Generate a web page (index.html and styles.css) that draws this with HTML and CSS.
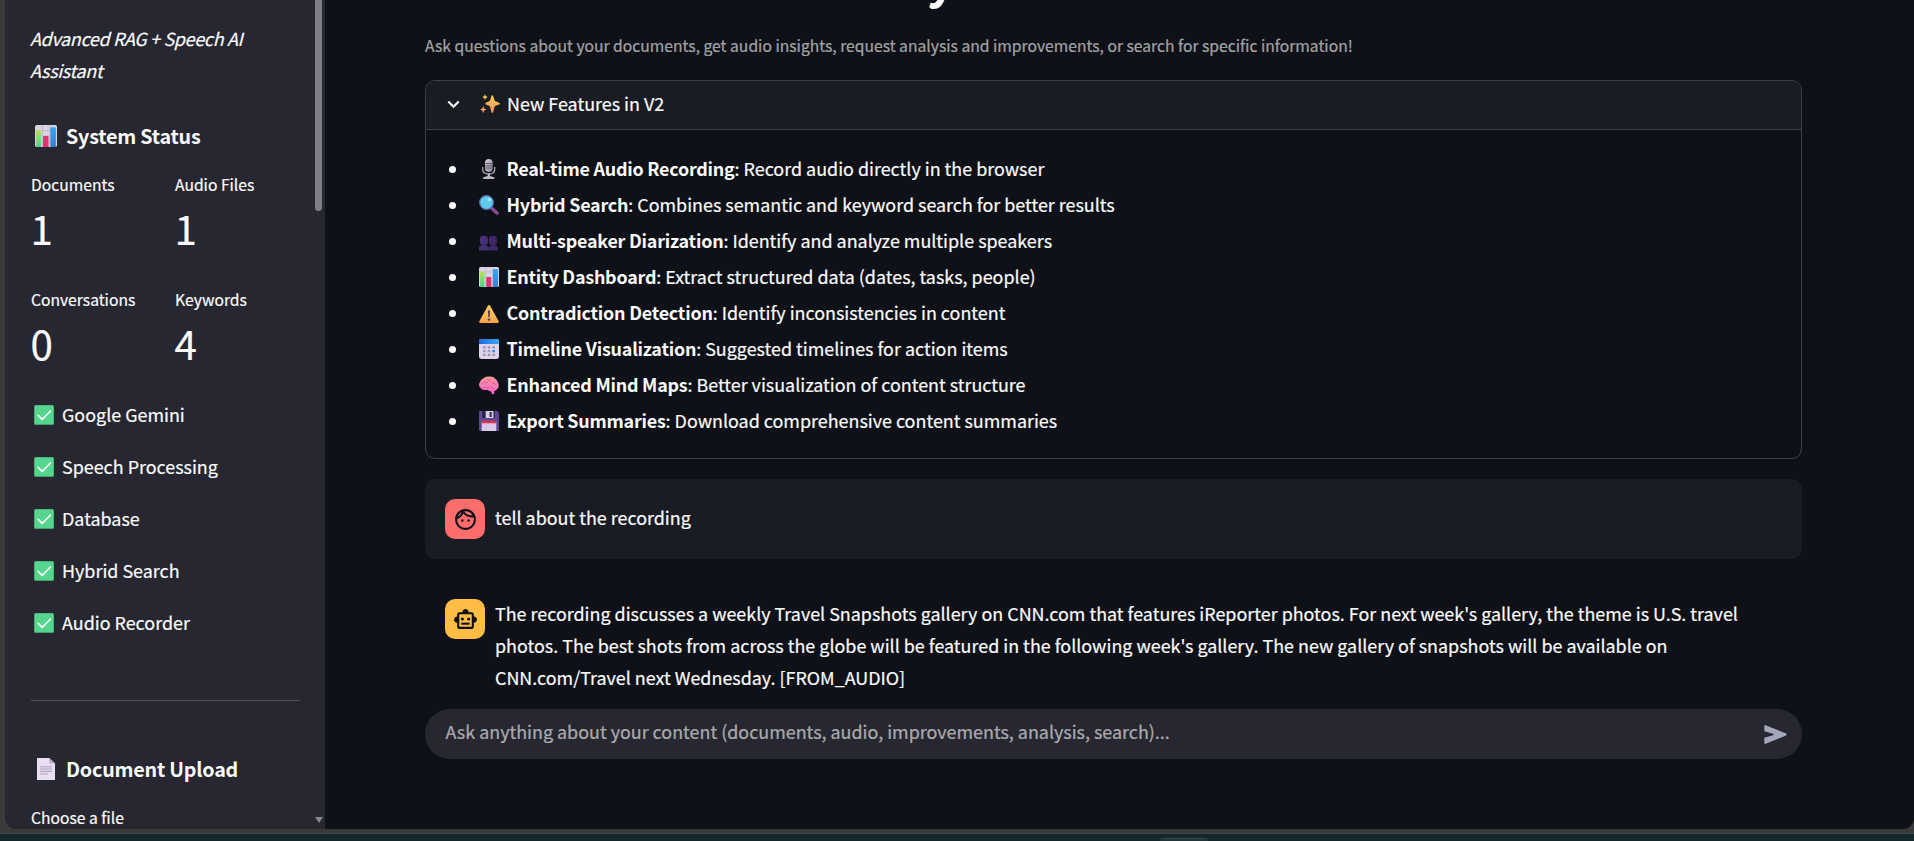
FILE: index.html
```
<!DOCTYPE html>
<html lang="en">
<head>
<meta charset="utf-8">
<title>Advanced RAG + Speech AI Assistant</title>
<link rel="stylesheet" href="styles.css">
</head>
<body>
<svg class="defs" width="0" height="0" aria-hidden="true">
  <defs>
    <linearGradient id="g-green" x1="0" y1="0" x2="0" y2="1"><stop offset="0" stop-color="#b4e34c"/><stop offset="1" stop-color="#4fd18b"/></linearGradient>
    <linearGradient id="g-blue" x1="0" y1="0" x2="0" y2="1"><stop offset="0" stop-color="#2fa8f5"/><stop offset="1" stop-color="#3b7fd0"/></linearGradient>
    <linearGradient id="g-amber" x1="0" y1="0" x2="0" y2="1"><stop offset="0" stop-color="#ffd255"/><stop offset="1" stop-color="#ffa04f"/></linearGradient>
    <linearGradient id="g-spark" x1="0.6" y1="0" x2="0.4" y2="1"><stop offset="0" stop-color="#ffd352"/><stop offset="1" stop-color="#f98b62"/></linearGradient>
    <linearGradient id="g-brain" x1="0" y1="0" x2="0" y2="1"><stop offset="0" stop-color="#f79a9a"/><stop offset="1" stop-color="#ff62cf"/></linearGradient>
    <linearGradient id="g-mic" x1="0" y1="0" x2="1" y2="1"><stop offset="0" stop-color="#d8d4de"/><stop offset="1" stop-color="#8d8299"/></linearGradient>
    <linearGradient id="g-people" x1="0" y1="0" x2="1" y2="0"><stop offset="0" stop-color="#4a3279"/><stop offset="1" stop-color="#3b2263"/></linearGradient>
    <linearGradient id="g-cal" x1="0" y1="0" x2="1" y2="0"><stop offset="0" stop-color="#2367d8"/><stop offset="1" stop-color="#33a9fb"/></linearGradient>
    <symbol id="check" viewBox="0 0 20 20"><rect width="20" height="20" rx="1.6" fill="#3fa56c"/><rect x=".8" y=".4" width="18.6" height="18.6" rx="1.4" fill="#55d58d"/><path d="M4.2 10.3l4 4 8.3-8.3" fill="none" stroke="#f3fff8" stroke-width="1.7" stroke-linecap="round" stroke-linejoin="round"/></symbol>
    <symbol id="chart" viewBox="0 0 20 20"><rect width="20" height="20" rx="1.6" fill="#d9d3e2"/><path d="M0 5h20M0 10h20M0 15h20M6.7 0v20M13.4 0v20" stroke="#bdb4c9" stroke-width=".7"/><path d="M1 5.5q0-1 1-1h2.4q1 0 1 1V20H1z" fill="url(#g-green)"/><path d="M7.300 11q0-1 1-1h3q1 0 1 1v9h-5z" fill="#e2316f"/><path d="M14 3q0-1 1-1h3q1 0 1 1v17h-5z" fill="url(#g-blue)"/></symbol>
    <symbol id="page" viewBox="0 0 20 20"><path d="M1.800 0H13l5.200 5v15H1.800z" fill="#e7def0"/><path d="M13 0v5h5.200z" fill="#b9adc6"/><path d="M4.500 8h11M4.500 10h11M4.500 12.200h11M4.500 14.500h7" stroke="#a99cba" stroke-width=".9"/></symbol>
    <symbol id="sparkles" viewBox="0 0 20 20"><g fill="url(#g-spark)"><path d="M12.300 1.200c.5 0 .7.400.9 1l1.200 3.700c.3.900.8 1.400 1.700 1.700l3 1.100c.9.300.9 1.400 0 1.700l-3 1.200c-.9.300-1.400.8-1.700 1.700l-1.200 4.600c-.3 1.300-1.500 1.300-1.800 0l-1.200-4.600c-.3-.9-.8-1.400-1.700-1.700l-2.600-1.200c-.8-.3-.8-1.400 0-1.700l2.600-1.100c.9-.3 1.400-.8 1.700-1.700l1.200-3.700c.2-.6.4-1 .9-1z"/><path d="M5 .2l.9 2 2 .9-2 .9-.9 2-.9-2-2-.9 2-.9zM3.200 12l1 2.500 2.500 1-2.500 1-1 2.700-1-2.700-2.400-1 2.400-1z"/></g></symbol>
    <symbol id="mic" viewBox="0 0 20 20"><rect x="6" y="0" width="7.600" height="13" rx="3.800" fill="url(#g-mic)"/><path d="M6.200 4.500h7.200M6.200 6.800h7.200M6.200 9h7.200" stroke="#5c5468" stroke-width="1"/><path d="M3.700 8v2.200q0 4.800 6 4.800t6-4.800V8" fill="none" stroke="#aaa1b5" stroke-width="1.300"/><path d="M8.700 14.500h2.200v2.600l4.400 1.100V20H4.200v-1.800l4.500-1.100z" fill="#bfb8c8"/></symbol>
    <symbol id="magnifier" viewBox="0 0 20 20"><path d="M12.500 13l5.500 5" stroke="#8a4a90" stroke-width="3.600" stroke-linecap="round"/><circle cx="7.500" cy="7.500" r="6.900" fill="#5ecbee" stroke="#5468a4" stroke-width="1.200"/><ellipse cx="10.500" cy="4.500" rx="2" ry="1.600" fill="#a5e5f8"/></symbol>
    <symbol id="people" viewBox="0 0 20 20"><g fill="url(#g-people)"><path d="M1 8q0-3.200 4-3.200T9 8v1.800q0 4-2.500 4.500h-3Q1 13.800 1 9.800zM10 8q0-3.200 4-3.200T18 8v1.800q0 4-2.500 4.500h-3Q10 13.800 10 9.800z"/><path d="M0 17q0-2 2-2.200l3-.8 3 .8q2 .2 2 2.200v2.500H0zM10.200 17q0-2 2-2.200l2-.8 2.800.8q2 .2 2 2.200v2.500h-8.800z"/></g></symbol>
    <symbol id="warning" viewBox="0 0 20 20"><path d="M8.900 2.800q1.100-1.800 2.200 0l8.600 15.400q.6 1.800-1 1.800H1.300q-1.600 0-1-1.800z" fill="url(#g-amber)"/><path d="M9 7.500h2l-.3 6.800H9.300z" fill="#4b3b55"/><circle cx="10" cy="16.600" r="1.200" fill="#4b3b55"/></symbol>
    <symbol id="calendar" viewBox="0 0 20 20"><rect width="20" height="20" rx="2.400" fill="#ddd6ea"/><path d="M0 5V2q0-2 2-2h16q2 0 2 2v3z" fill="url(#g-cal)"/><path d="M4 7.300h2.600v2.200H4zM8.700 7.300h2.600v2.200H8.700zM13.300 7.300H16v2.200h-2.700zM4 11h2.600v2.200H4zM8.700 11h2.600v2.200H8.700zM4 14.800h2.600V17H4zM8.700 14.800h2.600V17H8.700zM13.300 14.800H16V17h-2.700z" fill="#a296b3"/><path d="M13.300 11H16v2.200h-2.700z" fill="#2f8be6"/></symbol>
    <symbol id="brain" viewBox="0 0 20 20"><path d="M3 14.200Q-.8 12.500.3 8.300 1.500 4.500 4.800 3q2.500-1.800 6-1.400 3.500-.2 5.700 2.400 3 2 3.200 5.700.3 3.500-2 4.700-1 1.400-2.700 1.500l.4 2.600q-1.800 1.400-2.800-.2l-.5-1.800q-2.300-.3-3.200-1.500-3.300.3-5.900-.8z" fill="url(#g-brain)"/><path d="M3 9q3-3.500 6-1.200M8 3.500q1 2.400 3.700 2M13 8q3-.8 4 2M4 12.500q4 1.500 7-.8M11.800 11.500q2 .8 3 2.600" fill="none" stroke="#d6508f" stroke-width=".8"/></symbol>
    <symbol id="floppy" viewBox="0 0 20 20"><path d="M0 1q0-1 1-1h17.500L20 1.500V19q0 1-1 1H1q-1 0-1-1z" fill="#5b4a92"/><path d="M3.300 0H16v7H3.300z" fill="#2f2347"/><path d="M6.700 0h7.800v7H6.700z" fill="#d8d0e6"/><path d="M10.500 1h2.300v5h-2.300z" fill="#44365f"/><path d="M2.700 10.500h14.600V20H2.700z" fill="#d8c9e6"/><path d="M2.700 9.800h14.600v2.400H2.700z" fill="#e2304c"/></symbol>
  </defs>
</svg>

<div class="window">
  <aside class="sidebar">
    <p class="tagline">Advanced RAG + Speech AI<br>Assistant</p>

    <h2 class="section-title status-title"><svg class="emoji-lg"><use href="#chart"/></svg>System Status</h2>
    <div class="metrics">
      <div class="metric"><div class="metric-label">Documents</div><div class="metric-value">1</div></div>
      <div class="metric"><div class="metric-label">Audio Files</div><div class="metric-value">1</div></div>
      <div class="metric"><div class="metric-label">Conversations</div><div class="metric-value">0</div></div>
      <div class="metric"><div class="metric-label">Keywords</div><div class="metric-value">4</div></div>
    </div>

    <div class="checks">
      <p class="check"><svg class="emoji"><use href="#check"/></svg>Google Gemini</p>
      <p class="check"><svg class="emoji"><use href="#check"/></svg>Speech Processing</p>
      <p class="check"><svg class="emoji"><use href="#check"/></svg>Database</p>
      <p class="check"><svg class="emoji"><use href="#check"/></svg>Hybrid Search</p>
      <p class="check"><svg class="emoji"><use href="#check"/></svg>Audio Recorder</p>
    </div>

    <hr class="divider">

    <h2 class="section-title"><svg class="emoji-lg"><use href="#page"/></svg>Document Upload</h2>
    <div class="upload-label">Choose a file</div>

    <div class="scroll-thumb"></div>
    <div class="scroll-arrow"></div>
  </aside>

  <main class="main">
    <h1 class="title">y</h1>
    <p class="caption">Ask questions about your documents, get audio insights, request analysis and improvements, or search for specific information!</p>

    <section class="expander">
      <header class="expander-head">
        <svg class="chevron" viewBox="0 0 13 9"><path d="M1.300 1.500l5.200 5.200 5.200-5.200" fill="none" stroke="#fafafa" stroke-width="2.200"/></svg>
        <svg class="emoji"><use href="#sparkles"/></svg><span class="expander-label">New Features in V2</span>
      </header>
      <ul class="features">
        <li class="feature"><svg class="emoji"><use href="#mic"/></svg><span><b>Real-time Audio Recording</b>: Record audio directly in the browser</span></li>
        <li class="feature"><svg class="emoji"><use href="#magnifier"/></svg><span><b>Hybrid Search</b>: Combines semantic and keyword search for better results</span></li>
        <li class="feature"><svg class="emoji"><use href="#people"/></svg><span><b>Multi-speaker Diarization</b>: Identify and analyze multiple speakers</span></li>
        <li class="feature"><svg class="emoji"><use href="#chart"/></svg><span><b>Entity Dashboard</b>: Extract structured data (dates, tasks, people)</span></li>
        <li class="feature"><svg class="emoji"><use href="#warning"/></svg><span><b>Contradiction Detection</b>: Identify inconsistencies in content</span></li>
        <li class="feature"><svg class="emoji"><use href="#calendar"/></svg><span><b>Timeline Visualization</b>: Suggested timelines for action items</span></li>
        <li class="feature"><svg class="emoji"><use href="#brain"/></svg><span><b>Enhanced Mind Maps</b>: Better visualization of content structure</span></li>
        <li class="feature"><svg class="emoji"><use href="#floppy"/></svg><span><b>Export Summaries</b>: Download comprehensive content summaries</span></li>
      </ul>
    </section>

    <article class="message user">
      <div class="avatar avatar-user"><svg class="avatar-icon" viewBox="0 0 24 24"><path fill="#0e1117" d="M10.250 13c0 .69-.56 1.250-1.250 1.250S7.750 13.690 7.750 13s.56-1.250 1.250-1.250 1.250.56 1.250 1.250zM15 11.750c-.69 0-1.250.56-1.250 1.250s.56 1.250 1.250 1.250 1.250-.56 1.250-1.250-.56-1.250-1.250-1.250zm7 .25c0 5.520-4.480 10-10 10S2 17.520 2 12 6.480 2 12 2s10 4.480 10 10zM10.660 4.120C12.060 6.440 14.600 8 17.500 8c.46 0 .91-.05 1.340-.12C17.440 5.560 14.900 4 12 4c-.46 0-.91.05-1.340.12zM4.420 9.470c1.710-.97 3.030-2.550 3.660-4.440C6.370 6 5.050 7.580 4.420 9.470zM20 12c0-.78-.12-1.530-.33-2.240-.7.150-1.420.24-2.170.24-3.130 0-5.920-1.440-7.760-3.690C8.690 8.870 6.600 10.880 4 11.860c.01.040 0 .09 0 .14 0 4.410 3.590 8 8 8s8-3.590 8-8z"/></svg></div>
      <p class="message-text">tell about the recording</p>
    </article>

    <article class="message bot">
      <div class="avatar avatar-bot"><svg class="avatar-icon" viewBox="0 0 24 24"><path fill="#0e1117" fill-rule="evenodd" d="M20 9V7c0-1.100-.9-2-2-2h-3c0-1.660-1.340-3-3-3S9 3.340 9 5H6c-1.100 0-2 .9-2 2v2c-1.660 0-3 1.340-3 3s1.340 3 3 3v4c0 1.100.9 2 2 2h12c1.100 0 2-.9 2-2v-4c1.660 0 3-1.340 3-3s-1.340-3-3-3zm-2 10H6V7h12v12z"/><circle cx="9" cy="11.500" r="1.500" fill="#0e1117"/><circle cx="15" cy="11.500" r="1.500" fill="#0e1117"/><path fill="#0e1117" d="M8 15h8v2H8z"/></svg></div>
      <p class="message-text">The recording discusses a weekly Travel Snapshots gallery on CNN.com that features iReporter photos. For next week's gallery, the theme is U.S. travel<br>photos. The best shots from across the globe will be featured in the following week's gallery. The new gallery of snapshots will be available on<br>CNN.com/Travel next Wednesday. [FROM_AUDIO]</p>
    </article>

    <div class="chat-input">
      <span class="placeholder">Ask anything about your content (documents, audio, improvements, analysis, search)...</span>
      <svg class="send" viewBox="0 0 23 19"><path fill="#a3a8b8" d="M.3 1.200Q.3-.3 1.700.2l20 8.100q1.600 1.200 0 2.400l-20 8.100Q.3 19.300.3 17.800v-5l8.800-2.500q1.200-.8 0-1.600L.3 6.300z"/></svg>
    </div>
  </main>
</div>
<footer class="taskbar"><div class="taskbar-tab"></div></footer>
</body>
</html>
```
FILE: styles.css
```
* { box-sizing: border-box; }
body, h1, h2, p, ul { margin: 0; padding: 0; }
body {
  height: 841px;
  overflow: hidden;
  background: #3b3a3a;
  color: #fafafa;
  font: 400 17.910px/32px "Noto Sans CJK SC", "Noto Sans", sans-serif;
  white-space: nowrap;
  -webkit-text-stroke: 0.2px;
}
.defs { position: absolute; }
.window {
  display: flex;
  height: 829px;
  margin-left: 5px;
  overflow: hidden;
  border-radius: 0 0 11px 12px;
  background: #0e1117;
}
.emoji { display: block; flex: none; width: 20px; height: 20px; }
.emoji-lg { display: block; flex: none; width: 22px; height: 22px; margin: 0 9px 0 4px; }

/* Sidebar */
.sidebar {
  position: relative;
  flex: none;
  width: 320px;
  height: 829px;
  padding: 22px 25px 0 26px;
  overflow: hidden;
  background: #262730;
}
.tagline { margin-left: -1px; font-style: italic; letter-spacing: -0.3px; }
.section-title {
  display: flex;
  align-items: center;
  height: 26px;
  font-size: 19.700px;
  line-height: 26px;
  font-weight: 700;
  letter-spacing: -0.2px;
  -webkit-text-stroke: 0;
}
.status-title { margin-top: 37px; }
.metrics {
  display: grid;
  grid-template-columns: 144px 1fr;
  row-gap: 30px;
  margin-top: 22px;
}
.metric-label, .upload-label { font-size: 15.670px; line-height: 28px; }
.metric-value { margin: 1px 0 0 -0.5px; font-size: 40.300px; line-height: 56px; }
.checks { display: flex; flex-direction: column; gap: 20px; margin-top: 27px; }
.check { display: flex; align-items: center; height: 32px; }
.check .emoji { margin: 2px 8px 0 3px; }
.divider {
  height: 1px;
  margin: 62px 0 55px;
  border: 0;
  background: #515259;
}
.upload-label { margin-top: 22px; }
.scroll-thumb {
  position: absolute;
  top: 0;
  right: 3px;
  width: 7px;
  height: 211px;
  border-radius: 0 0 4px 4px;
  background: #7e7e84;
}
.scroll-arrow {
  position: absolute;
  right: 2px;
  bottom: 6px;
  border: solid transparent;
  border-width: 6px 4.500px 0;
  border-top-color: #87878c;
}

/* Main column */
.main { width: 1477px; padding-left: 100px; }
.title {
  height: 60px;
  margin-top: -54px;
  padding-left: 502px;
  font-size: 49px;
  line-height: 60px;
  font-weight: 700;
}
.caption {
  margin-top: 26px;
  font-size: 15.680px;
  line-height: 28px;
  color: rgba(250, 250, 250, 0.6);
}
.expander {
  margin-top: 20px;
  border: 1px solid #3d4045;
  border-radius: 10px;
  overflow: hidden;
}
.expander-head {
  display: flex;
  align-items: center;
  height: 49px;
  padding: 0 0 3px 21px;
  border-bottom: 1px solid #3d4045;
  background: #1a1c24;
}
.expander-head .emoji { margin-right: 7.500px; }
.expander-label { margin-top: -2px; }
.chevron { width: 13px; height: 9px; margin: 1px 19.500px 0 0; }
.features {
  display: flex;
  flex-direction: column;
  gap: 4px;
  padding: 22px 0 22px 23px;
  list-style: none;
}
.feature { display: flex; align-items: center; height: 32px; }
.feature::before {
  content: "";
  width: 7px;
  height: 7px;
  margin: 3px 23px 0 0;
  border-radius: 50%;
  background: #fafafa;
}
.feature .emoji { margin: 2px 7.500px 0 0; }
.feature b { letter-spacing: -0.22px; -webkit-text-stroke: 0; }

/* Conversation */
.message {
  display: flex;
  gap: 10px;
  margin-top: 20px;
  padding: 20px 20px 0;
  border-radius: 10px;
}
.user { height: 80px; background: #1a1c24; }
.user .message-text { margin-top: 2px; }
.bot .message-text { margin-top: -2px; }
.avatar {
  display: flex;
  flex: none;
  align-items: center;
  justify-content: center;
  width: 40px;
  height: 40px;
  border-radius: 10px;
}
.avatar-user { background: #ff6c6c; }
.avatar-bot { background: #ffbd45; }
.avatar-icon { width: 25px; height: 25px; }
.chat-input {
  display: flex;
  align-items: center;
  justify-content: space-between;
  height: 50px;
  margin-top: 16px;
  padding: 0 15px 0 20.500px;
  border-radius: 25px;
  background: #262730;
}
.placeholder { padding-bottom: 6px; color: rgba(250, 250, 250, 0.6); }
.send { width: 23px; height: 19px; }

/* Desktop strip under the window */
.taskbar {
  height: 8px;
  margin-top: 4px;
  padding-left: 1160px;
  border-top: 1px solid #37494f;
  background: #13272d;
}
.taskbar-tab {
  width: 48px;
  height: 3px;
  margin-top: 4px;
  border-top: 1px solid #34474d;
  border-radius: 4px 4px 0 0;
  background: #22363c;
}
```
